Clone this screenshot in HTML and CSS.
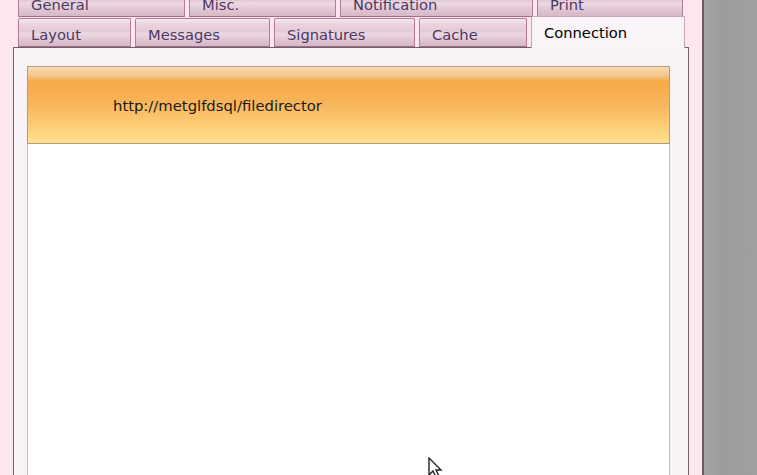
FILE: index.html
```html
<!DOCTYPE html>
<html lang="en">
<head>
    <meta charset="UTF-8">
    <meta name="viewport" content="width=device-width, initial-scale=1.0">
    <title>Options - Connection</title>
    <link rel="stylesheet" href="styles.css">
</head>
<body>
    <div class="screen">
        <div class="frame">
            <div class="tab-row tab-row-back">
                <div class="tab tab-general">General</div>
                <div class="tab tab-misc">Misc.</div>
                <div class="tab tab-notification">Notification</div>
                <div class="tab tab-print">Print</div>
            </div>
            <div class="tab-row tab-row-front">
                <div class="tab tab-layout">Layout</div>
                <div class="tab tab-messages">Messages</div>
                <div class="tab tab-signatures">Signatures</div>
                <div class="tab tab-cache">Cache</div>
                <div class="tab tab-connection active">Connection</div>
            </div>
            <div class="panel">
                <div class="server-list">
                    <div class="server-item selected">http://metglfdsql/filedirector</div>
                </div>
            </div>
        </div>
        <div class="desktop"></div>
    </div>

    <!-- mouse pointer -->
    <svg class="cursor" width="20" height="20" viewBox="0 0 20 20">
        <path d="M1 1 L1 18 L5 14 L8 20 L11 19 L8 13 L13 13 Z" fill="#ffffff" stroke="#222222" stroke-width="1.4" stroke-linejoin="miter"/>
    </svg>
</body>
</html>
```

FILE: styles.css
```css
body {
    margin: 0;
    padding: 0;
    font-family: "DejaVu Sans", Verdana, sans-serif;
    background-color: #9e9e9e;
    overflow: hidden;
}

.screen {
    display: flex;
    height: 475px;
    overflow: hidden;
}

.frame {
    width: 704px;
    flex-shrink: 0;
    box-sizing: border-box;
    padding: 0 13px 0 13px;
    background-color: #fde6ec;
    border-right: 2px solid #6a5a62;
    display: flex;
    flex-direction: column;
}

.desktop {
    flex: 1;
    background: linear-gradient(to right, #a3a3a3, #9c9c9c 40%, #a0a0a0);
}

.tab-row {
    display: flex;
    gap: 4px;
    padding-left: 5px;
}

.tab-row-back {
    margin-top: -13px;
    height: 30px;
}

.tab-row-front {
    margin-top: 1px;
    height: 29px;
    align-items: flex-end;
}

.tab {
    box-sizing: border-box;
    height: 100%;
    padding-left: 12px;
    font-size: 14.7px;
    color: #4a3a62;
    border: 1px solid #b47c99;
    border-bottom-color: #a86a8a;
    border-radius: 2px 2px 0 0;
    background: linear-gradient(to bottom,
        #f6e8ef 0%,
        #ead3df 20%,
        #e3c9d6 45%,
        #ecd8e2 55%,
        #dfc3d1 80%,
        #d6b8c7 100%);
    display: flex;
    align-items: center;
    padding-top: 4px;
}

.tab-row-back .tab {
    align-items: flex-end;
    padding-top: 0;
    padding-bottom: 3px;
}

.tab-general { width: 167px; }
.tab-misc { width: 147px; }
.tab-notification { width: 193px; }
.tab-print { width: 146px; }

.tab-layout { width: 113px; }
.tab-messages { width: 135px; }
.tab-signatures { width: 141px; }
.tab-cache { width: 108px; }

.tab-connection {
    width: 154px;
}

.tab.active {
    height: 32px;
    margin-bottom: -1px;
    position: relative;
    z-index: 1;
    color: #000000;
    background: #f9f4f8;
    border-color: #c8a6b7;
    border-bottom: none;
    padding-top: 0;
    padding-bottom: 1px;
}

.panel {
    flex: 1;
    background-color: #f8f3f7;
    border: 1px solid #6e6068;
    border-bottom: none;
    padding: 18px 18px 0 13px;
    display: flex;
    flex-direction: column;
}

.server-list {
    flex: 1;
    background-color: #ffffff;
    border: 1px solid #d3b6c5;
    border-bottom: none;
}

.server-item {
    height: 76px;
    display: flex;
    align-items: center;
    padding-left: 85px;
    font-size: 14.8px;
    color: #1a1a1a;
}

.server-item.selected {
    border: 1px solid #b69c7f;
    margin: -1px -1px 0 -1px;
    background: linear-gradient(to bottom,
        #f7dcb4 0%,
        #f3c88e 11%,
        #f7aa48 19%,
        #f8b358 45%,
        #fbcb76 75%,
        #fde18f 100%);
}

.cursor {
    position: absolute;
    left: 428px;
    top: 457px;
}
```
